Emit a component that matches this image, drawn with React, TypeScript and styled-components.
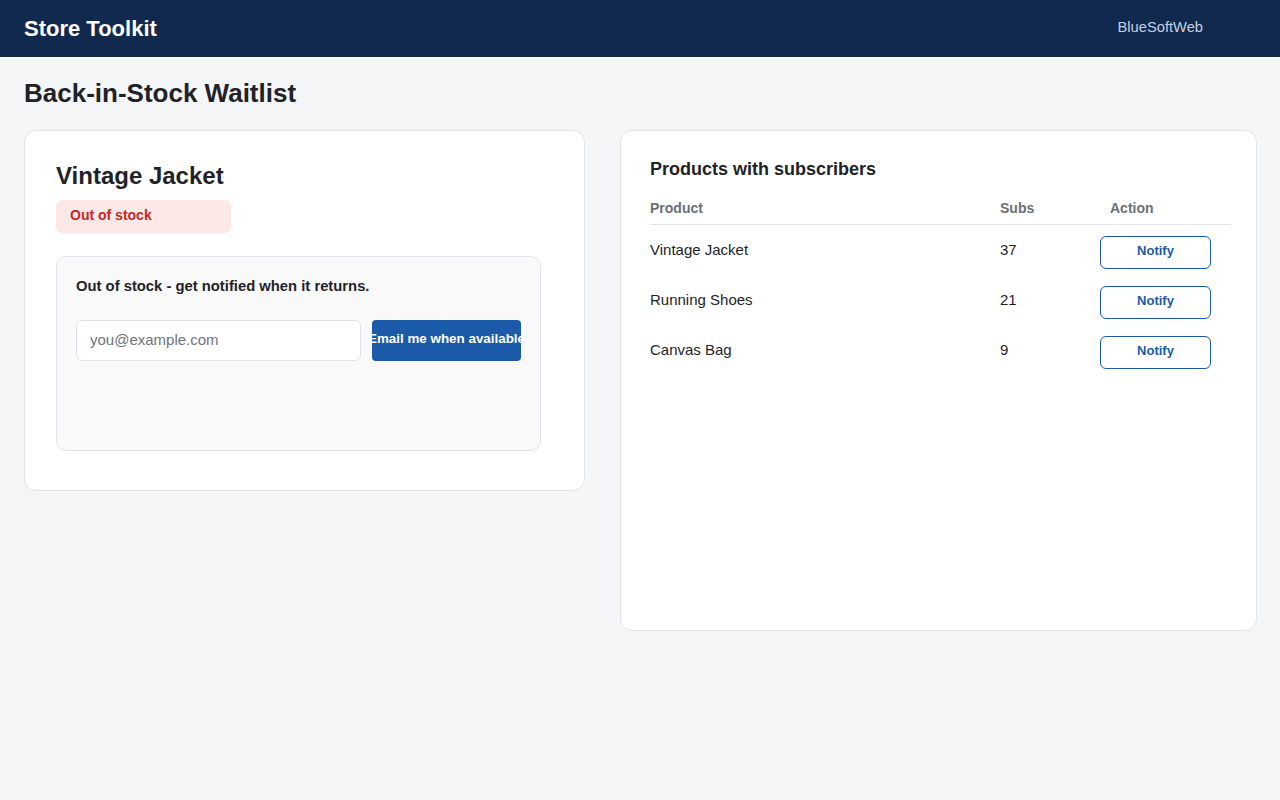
import * as React from "react";
import styled, { createGlobalStyle } from "styled-components";

const Global = createGlobalStyle`
  html, body {
    margin: 0;
    padding: 0;
    background: #f5f6f8;
    font-family: "Liberation Sans", Arial, sans-serif;
    color: #1f2328;
  }
  * { box-sizing: border-box; }
`;

const TopBar = styled.header`
  height: 57px;
  background: #11294f;
  display: flex;
  align-items: center;
  justify-content: space-between;
  padding: 0 77px 0 24px;
`;

const Brand = styled.div`
  color: #fff;
  font-size: 22px;
  font-weight: 700;
`;

const Account = styled.div`
  color: #c4d0e3;
  font-size: 14.7px;
  margin-top: -4px;
`;

const Main = styled.main`
  padding: 20px 23px 24px 24px;
`;

const PageTitle = styled.h1`
  margin: 0 0 21px;
  font-size: 26px;
  line-height: 32px;
  font-weight: 700;
  color: #1f2328;
`;

const Columns = styled.div`
  display: grid;
  grid-template-columns: 561px 1fr;
  gap: 35px;
  align-items: start;
`;

const Card = styled.section<{ $minH?: number }>`
  background: #fff;
  border: 1px solid #e2e4ea;
  border-radius: 12px;
  min-height: ${(p) => (p.$minH ? `${p.$minH}px` : "auto")};
`;

const ProductCard = styled(Card)`
  padding: 31px 31px 39px;
`;

const ProductName = styled.h2`
  margin: 0;
  font-size: 24px;
  line-height: 28px;
  font-weight: 700;
`;

const Badge = styled.div`
  margin-top: 10px;
  width: 175px;
  height: 33px;
  padding: 7px 14px;
  background: #fde8e8;
  color: #c62828;
  font-size: 14px;
  font-weight: 700;
  border-radius: 6px;
`;

const WaitBox = styled.div`
  margin-top: 23px;
  width: 485px;
  min-height: 195px;
  background: #f9f9fa;
  border: 1px solid #e2e3e8;
  border-radius: 10px;
  padding: 19px;
`;

const WaitText = styled.p`
  margin: 0;
  font-size: 14.8px;
  line-height: 20px;
  font-weight: 700;
`;

const Form = styled.form`
  display: flex;
  gap: 11px;
  margin-top: 24px;
`;

const EmailInput = styled.input`
  width: 285px;
  height: 41px;
  border: 1px solid #e0e2e8;
  border-radius: 6px;
  background: #fff;
  padding: 0 13px 2px;
  font-family: "Liberation Sans", Arial, sans-serif;
  font-size: 15px;
  color: #1f2328;
  outline: none;
  &::placeholder { color: #70747c; }
`;

const PrimaryButton = styled.button`
  width: 149px;
  height: 41px;
  padding: 0 0 5px;
  border: 0;
  border-radius: 4px;
  background: #1a5aa8;
  color: #fff;
  font-family: "Liberation Sans", Arial, sans-serif;
  font-size: 13.4px;
  font-weight: 700;
  white-space: nowrap;
  display: flex;
  justify-content: center;
  align-items: center;
  overflow: visible;
`;

const ListCard = styled(Card)`
  padding: 27px 25px 30px 29px;
`;

const ListTitle = styled.h2`
  margin: 0;
  font-size: 18px;
  line-height: 22px;
  font-weight: 700;
`;

const Row = styled.div<{ $head?: boolean }>`
  display: grid;
  grid-template-columns: 350px 100px 1fr;
  align-items: start;
  height: ${(p) => (p.$head ? "25px" : "50px")};
  padding-top: ${(p) => (p.$head ? "0" : "11px")};
  border-bottom: ${(p) => (p.$head ? "1px solid #e2e4ea" : "0")};
  margin-top: ${(p) => (p.$head ? "20px" : "0")};
  font-size: ${(p) => (p.$head ? "14px" : "15px")};
  font-weight: ${(p) => (p.$head ? 700 : 400)};
  color: ${(p) => (p.$head ? "#6b6f76" : "#1f2328")};
`;

const Cell = styled.div<{ $indent?: number }>`
  padding-top: ${(p) => p.$indent ?? 0}px;
`;

const HeadCell = styled.div<{ $pad?: number }>`
  padding-left: ${(p) => p.$pad ?? 0}px;
  line-height: 17px;
`;

const OutlineButton = styled.button`
  width: 111px;
  height: 33px;
  border: 1px solid #1a5aa8;
  border-radius: 6px;
  background: #fff;
  color: #1a5aa8;
  font-family: "Liberation Sans", Arial, sans-serif;
  font-size: 13px;
  font-weight: 700;
  padding: 0 0 4px;
`;

const products = [
  { name: "Vintage Jacket", subs: 37 },
  { name: "Running Shoes", subs: 21 },
  { name: "Canvas Bag", subs: 9 },
];

export default function App() {
  return (
    <>
      <Global />
      <TopBar>
        <Brand>Store Toolkit</Brand>
        <Account>BlueSoftWeb</Account>
      </TopBar>
      <Main>
        <PageTitle>Back-in-Stock Waitlist</PageTitle>
        <Columns>
          <ProductCard>
            <ProductName>Vintage Jacket</ProductName>
            <Badge>Out of stock</Badge>
            <WaitBox>
              <WaitText>Out of stock - get notified when it returns.</WaitText>
              <Form onSubmit={(e) => e.preventDefault()}>
                <EmailInput type="email" placeholder="you@example.com" />
                <PrimaryButton type="submit">Email me when available</PrimaryButton>
              </Form>
            </WaitBox>
          </ProductCard>
          <ListCard $minH={501}>
            <ListTitle>Products with subscribers</ListTitle>
            <Row $head>
              <HeadCell>Product</HeadCell>
              <HeadCell>Subs</HeadCell>
              <HeadCell $pad={10}>Action</HeadCell>
            </Row>
            {products.map((p) => (
              <Row key={p.name}>
                <Cell $indent={5}>{p.name}</Cell>
                <Cell $indent={5}>{p.subs}</Cell>
                <Cell>
                  <OutlineButton type="button">Notify</OutlineButton>
                </Cell>
              </Row>
            ))}
          </ListCard>
        </Columns>
      </Main>
    </>
  );
}
